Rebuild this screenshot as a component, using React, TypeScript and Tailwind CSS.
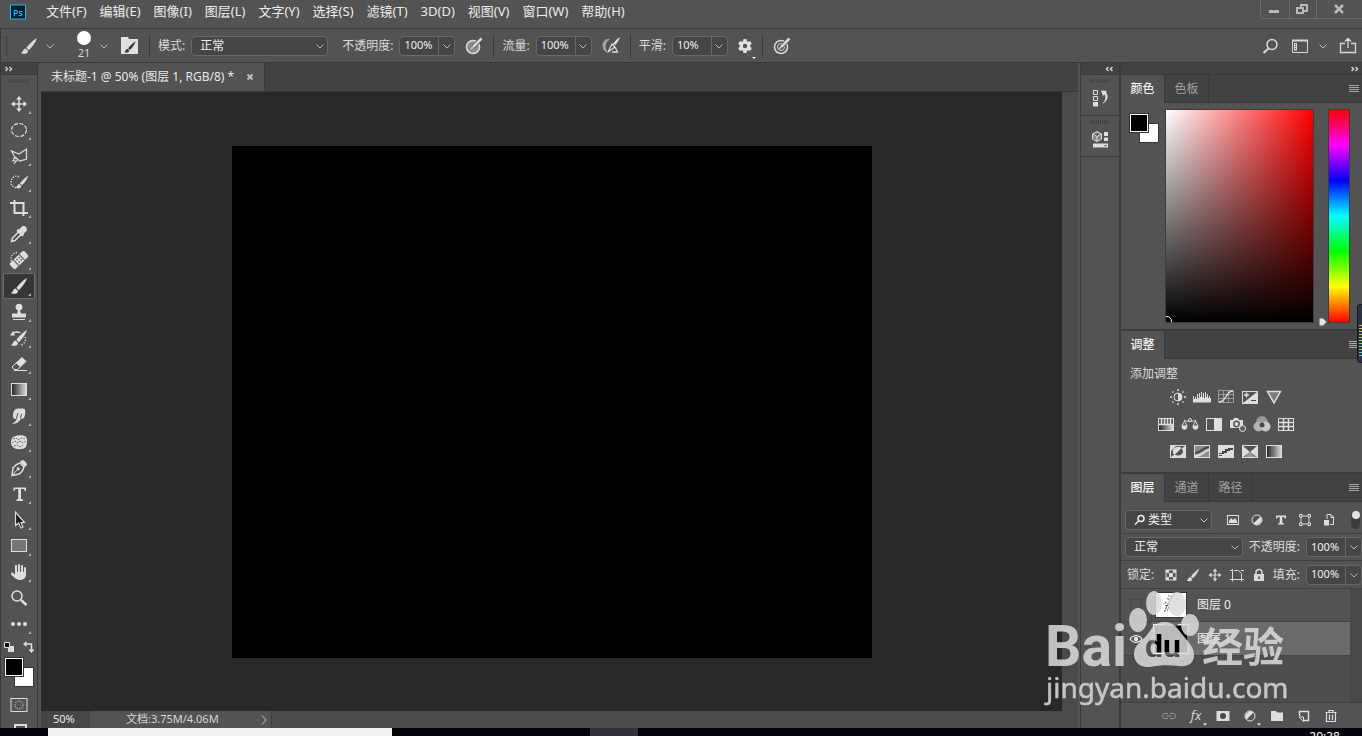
import { useState, type ReactNode } from 'react';
import clsx from 'clsx';
import { FaHand, FaGear } from 'react-icons/fa6';

const MENUS = [
  '文件(F)',
  '编辑(E)',
  '图像(I)',
  '图层(L)',
  '文字(Y)',
  '选择(S)',
  '滤镜(T)',
  '3D(D)',
  '视图(V)',
  '窗口(W)',
  '帮助(H)',
];

/* ---------- Shared pieces ---------- */

type IconProps = { w?: number; h?: number; children: ReactNode };

// Icons are drawn around the centre of their box
function Icon({ w = 18, h = 18, children }: IconProps) {
  return (
    <svg
      width={w}
      height={h}
      viewBox={`${-w / 2} ${-h / 2} ${w} ${h}`}
      fill="none"
      stroke="none"
      aria-hidden="true"
      className="shrink-0"
    >
      {children}
    </svg>
  );
}

function BrushShape() {
  return (
    <g fill="currentColor">
      <path d="M8-8C4.500-6 0-1.800-2.600 1.800L-.2 4.200C3.200 1.200 6.800-4 8-8Z" />
      <path d="M-3.300 2.600C-6 2.800-5.400 5.600-8 7.200C-5.500 8.300-1 8.200-.9 5Z" />
    </g>
  );
}

function MoveShape() {
  return (
    <g>
      <path d="M-6 0H6M0-6V6" stroke="currentColor" strokeWidth="1.500" />
      <path
        d="M0-8L3-4.500H-3ZM0 8L3 4.500H-3ZM-8 0L-4.500-3V3ZM8 0L4.500-3V3Z"
        fill="currentColor"
      />
    </g>
  );
}

function Chevron() {
  return (
    <Icon w={8} h={8}>
      <path d="M-3.500-1.500L0 2L3.500-1.500" stroke="#bdbdbd" />
    </Icon>
  );
}

function Divider() {
  return <span className="h-6 w-px shrink-0 bg-[#3b3b3b]" />;
}

function PercentBox({ label, value }: { label: string; value: string }) {
  return (
    <label className="flex shrink-0 items-center gap-1.5 text-xs">
      {label}
      <span className="flex h-5 w-14 items-center rounded-sm border border-[#686868] bg-[#454545]">
        <input
          defaultValue={value}
          className="w-[38px] min-w-0 bg-transparent pl-1 text-[11px] text-[#f0f0f0] outline-none"
        />
        <span className="flex h-full flex-1 items-center justify-center border-l border-[#686868]">
          <Chevron />
        </span>
      </span>
    </label>
  );
}

function PickBox({
  label,
  value,
  icon,
  className,
}: {
  label: string;
  value: string;
  icon?: ReactNode;
  className: string;
}) {
  return (
    <span
      className={clsx(
        'flex h-5 shrink-0 items-center rounded-sm border border-[#686868] bg-[#454545] pr-[3px] pl-2 text-xs text-[#f0f0f0]',
        className,
      )}
    >
      {icon}
      <select
        aria-label={label}
        className="min-w-0 flex-1 appearance-none bg-transparent outline-none"
      >
        <option>{value}</option>
      </select>
      <Chevron />
    </span>
  );
}

function Grip() {
  return (
    <span className="h-1 w-5 bg-[repeating-linear-gradient(90deg,#404040_0_1px,transparent_1px_2px)]" />
  );
}

function PanelMenu() {
  return (
    <button type="button" aria-label="面板菜单" className="ml-auto pr-[3px]">
      <Icon w={10} h={8}>
        <path d="M-5-3.500H5M-5-1.500H5M-5 .5H5M-5 2.500H5" stroke="#a8a8a8" />
      </Icon>
    </button>
  );
}

function PanelTabs({ tabs }: { tabs: string[] }) {
  const [active, setActive] = useState(tabs[0]);
  return (
    <div className="flex h-7 shrink-0 items-stretch bg-[#424242] text-xs">
      {tabs.map((tab) => (
        <button
          key={tab}
          type="button"
          onClick={() => setActive(tab)}
          className={clsx(
            'w-11 border-r border-[#383838]',
            tab === active
              ? 'bg-[#535353] font-medium text-[#f2f2f2]'
              : 'border-b text-[#a0a0a0]',
          )}
        >
          {tab}
        </button>
      ))}
      <span className="flex flex-1 items-center border-b border-[#383838]">
        <PanelMenu />
      </span>
    </div>
  );
}

/* ---------- Header ---------- */

function MenuBar() {
  return (
    <header className="flex h-[29px] shrink-0 items-center border-b border-[#383838] pl-2.5">
      <svg width="16" height="16" viewBox="0 0 16 16" className="mb-1 mr-5">
        <rect x=".5" y="1" width="15" height="14" fill="#00191f" stroke="#00c8ff" />
        <text
          x="8"
          y="11.500"
          textAnchor="middle"
          fill="#00c8ff"
          className="font-['Open_Sans',sans-serif] text-[9px] font-semibold"
        >
          Ps
        </text>
      </svg>
      <nav className="mb-1 flex gap-[13px] text-[13px] text-[#ececec]">
        {MENUS.map((menu) => (
          <button key={menu} type="button" className="whitespace-nowrap">
            {menu}
          </button>
        ))}
      </nav>
      <div className="ml-auto flex h-[19px] self-start rounded-bl-sm border-b border-l border-[#6b6b6b] text-[#b8b8b8]">
        <button type="button" aria-label="最小化" className="w-7 pl-2">
          <Icon w={12} h={12}>
            <path d="M-6 2.500H4" stroke="currentColor" strokeWidth="3" />
          </Icon>
        </button>
        <button
          type="button"
          aria-label="还原"
          className="w-7 border-x border-[#6b6b6b] pl-1.5"
        >
          <Icon w={12} h={12}>
            <path
              d="M-1-1V-4H5V2H2M-5-1H1V4H-5Z"
              stroke="currentColor"
              strokeWidth="2"
            />
          </Icon>
        </button>
        <button type="button" aria-label="关闭" className="w-[45px] pl-4">
          <Icon w={12} h={12}>
            <path d="M-4-4L4 4M4-4L-4 4" stroke="currentColor" strokeWidth="2.500" />
          </Icon>
        </button>
      </div>
    </header>
  );
}

function PressureIcon({ filled }: { filled?: boolean }) {
  return (
    <Icon>
      <circle
        cx="-1"
        cy="1"
        r="6.500"
        stroke="currentColor"
        strokeWidth="1.500"
        fill={filled ? '#8c8c8c' : 'none'}
      />
      {!filled && <circle cx="-1" cy="1" r="3.500" stroke="currentColor" />}
      <path d="M-1 1L7-7" stroke="#535353" strokeWidth="4" />
      <path d="M-1 1L7.500-7.500" stroke="currentColor" strokeWidth="2.500" />
      <path d="M-3.500 3.500L-2 .5L-.5 2Z" fill="currentColor" />
    </Icon>
  );
}

function OptionsBar() {
  return (
    <div className="flex h-[34px] shrink-0 items-center border-b border-l border-[#383838] pr-[5px] pl-1 text-[#d9d9d9]">
      <span className="h-5 w-[3px] bg-[repeating-linear-gradient(180deg,#404040_0_1px,transparent_1px_2px)]" />
      <button type="button" aria-label="画笔工具" className="ml-3 flex items-center gap-2">
        <Icon>
          <BrushShape />
        </Icon>
        <Chevron />
      </button>
      <span className="ml-2">
        <Divider />
      </span>
      <button
        type="button"
        aria-label="画笔预设"
        className="ml-3 flex items-center gap-1.5 text-[11px]"
      >
        <span className="flex w-5 flex-col items-center">
          <span className="size-3.5 rounded-full bg-white" />
          <span className="leading-4">21</span>
        </span>
        <Chevron />
      </button>
      <button type="button" aria-label="画笔设置" className="mr-2.5 ml-[13px]">
        <Icon>
          <path d="M-9-9H-2L-1-7H8V8H-9Z" fill="#e0e0e0" />
          <g className="text-[#3c3c3c]" transform="translate(0 1) scale(.72)">
            <BrushShape />
          </g>
        </Icon>
      </button>
      <Divider />
      <span className="mr-1.5 ml-2 shrink-0 text-xs">模式:</span>
      <PickBox label="模式" value="正常" className="w-[137px]" />
      <div className="ml-3.5 flex items-center gap-2.5">
        <PercentBox label="不透明度:" value="100%" />
        <button type="button" aria-label="不透明度压力">
          <PressureIcon filled />
        </button>
        <Divider />
      </div>
      <div className="ml-2 flex items-center gap-2.5">
        <PercentBox label="流量:" value="100%" />
        <button type="button" aria-label="喷枪">
          <Icon>
            <path
              d="M-1-7C-5-8-9-4-8.500 0S-6 6 -3 7C-5 4-6 1-5-2S-3-5-1-7Z"
              fill="#a0a0a0"
            />
            <path
              d="M7-7L2-1M-3 6L1-2L4 1L-3 6ZM4 1L6.500 6H1"
              stroke="currentColor"
              strokeWidth="1.300"
            />
            <path d="M8.500-8L3-3L4.500-1.500Z" fill="currentColor" stroke="currentColor" />
          </Icon>
        </button>
        <Divider />
      </div>
      <div className="ml-2 flex items-center gap-2.5">
        <PercentBox label="平滑:" value="10%" />
        <button type="button" aria-label="平滑选项" className="relative">
          <FaGear className="size-3.5 text-[#e0e0e0]" />
          <span className="absolute -right-1 -bottom-1.5 border-x-2 border-t-2 border-x-transparent border-t-white" />
        </button>
        <Divider />
        <button type="button" aria-label="大小压力">
          <PressureIcon />
        </button>
      </div>
      <div className="ml-auto flex items-center gap-3 pl-4">
        <button type="button" aria-label="搜索">
          <Icon>
            <circle cx="2" cy="-1.500" r="5" stroke="currentColor" strokeWidth="1.500" />
            <path d="M-1.500 2.500L-6.500 7" stroke="currentColor" strokeWidth="2" />
          </Icon>
        </button>
        <button type="button" aria-label="工作区" className="flex items-center gap-2.5">
          <Icon>
            <path d="M-7.500-5.500H7.500V6.500H-7.500Z" stroke="currentColor" />
            <path d="M-8-5.500H8" stroke="currentColor" strokeWidth="2" />
            <path d="M-4.500-3V4.500" stroke="currentColor" strokeWidth="3" />
            <path d="M-4.500-2V4" stroke="#535353" strokeDasharray="1 1" />
          </Icon>
          <Chevron />
        </button>
        <button type="button" aria-label="共享">
          <Icon>
            <path
              d="M-3-2.500H-7.500V6.500H7.500V-2.500H3M0 2V-7M-3-4.500L0-7.500L3-4.500"
              stroke="currentColor"
              strokeWidth="1.300"
            />
          </Icon>
        </button>
      </div>
    </div>
  );
}

/* ---------- Tools ---------- */

const line = { stroke: 'currentColor', strokeWidth: 1.5 };

const TOOLS: { name: string; flat?: boolean; icon: ReactNode }[] = [
  { name: '移动工具', icon: <MoveShape /> },
  {
    name: '椭圆选框工具',
    icon: <ellipse rx="7.500" ry="6.500" {...line} strokeWidth="1.200" strokeDasharray="4 1.500" />,
  },
  {
    name: '多边形套索工具',
    icon: (
      <g {...line} strokeWidth="1.200">
        <path d="M-3 3L-7.500-5L0-2L7.500-7V3L1 5L-2 3" />
        <circle cx="-3.500" cy="3.500" r="1.800" />
        <path d="M-5 4.500L-7 5M-3 5L-5 8" />
      </g>
    ),
  },
  {
    name: '快速选择工具',
    icon: (
      <g>
        <path
          d="M0-5.500C-4-7-8-4-8 0S-4 7 0 5"
          {...line}
          strokeDasharray="1.200 1.400"
        />
        <g transform="translate(3 0) scale(.8)">
          <BrushShape />
        </g>
      </g>
    ),
  },
  {
    name: '裁剪工具',
    icon: (
      <path d="M-9-5H4.500V8M-4.500-8V5H9" {...line} strokeWidth="2" />
    ),
  },
  {
    name: '吸管工具',
    icon: (
      <g>
        <path d="M-7.500 7.500L-6.500 4L0-2.500L2.500 0L-4 6.500Z" {...line} />
        <path
          d="M-1.500-4.500L.5-5L3-7.500C6-9 9-6 7.500-3L5-.5L4.500 1.500L3 2.500L-2.500-3Z"
          fill="currentColor"
        />
      </g>
    ),
  },
  {
    name: '污点修复画笔工具',
    icon: (
      <g>
        <path d="M-7.500 1C-9-3-6-7.500-2-7.500" {...line} strokeDasharray="1.200 1.400" />
        <g transform="rotate(-43)">
          <rect x="-10" y="-4" width="20" height="8" rx="2" fill="currentColor" />
          <path d="M-4-4V4M4-4V4" stroke="#535353" />
          <path
            d="M-2-1.500H-.5M1-1.500H2.500M-2 1.500H-.5M1 1.500H2.500"
            stroke="#535353"
            strokeWidth="1.500"
          />
        </g>
      </g>
    ),
  },
  { name: '画笔工具', icon: <BrushShape /> },
  {
    name: '仿制图章工具',
    icon: (
      <path
        d="M-6 8H6V7H-6ZM-7 5.500H7V1.500H2L1-1.500A3.500 3.500 0 1 0-1-1.500L-2 1.500H-7Z"
        fill="currentColor"
      />
    ),
  },
  {
    name: '历史记录画笔工具',
    icon: (
      <g>
        <BrushShape />
        <path d="M-7-4C-4-7 0-6 1-5" {...line} />
        <path d="M-9-2.500L-6-7L-4-2.500Z" fill="currentColor" />
        <path d="M6-1C8 3 4 7 1 7.500" {...line} strokeDasharray="1.200 1.600" />
      </g>
    ),
  },
  {
    name: '橡皮擦工具',
    icon: (
      <g>
        <path d="M-7 3L3-6.500L7-2.500L-1.500 5.500H-5Z" {...line} strokeWidth="1" />
        <path d="M-3-1L3-6.500L7-2.500L1 3Z" fill="currentColor" />
        <path d="M-5 6.500H8" {...line} strokeWidth="1" />
      </g>
    ),
  },
  {
    name: '渐变工具',
    icon: (
      <g>
        <defs>
          <linearGradient id="tool-gradient">
            <stop offset="0" stopColor="#222" />
            <stop offset="1" stopColor="#ddd" />
          </linearGradient>
        </defs>
        <rect
          x="-7.500"
          y="-6.500"
          width="15"
          height="12"
          fill="url(#tool-gradient)"
          stroke="currentColor"
        />
      </g>
    ),
  },
  {
    name: '涂抹工具',
    icon: (
      <g>
        <path
          d="M-6 0C-6-4-5-7-1-7.500H4C7-7 6.500-4 6-1C5.500 2 4 3.500 2 2.500C1 5-2 8-7 8C-3 5.500-2 4-2 2C-3.500 4-6 3-6 0Z"
          fill="currentColor"
        />
        <path d="M-2.500 2L-1-3M1.500 2.500L2.500-2" stroke="#535353" />
      </g>
    ),
  },
  {
    name: '海绵工具',
    icon: (
      <g>
        <path
          d="M-7-4C-5-7 5-8 7-5C9-3 8 2 7 5C4 8-4 8-6 5C-9 3-8-2-7-4Z"
          fill="currentColor"
        />
        <path
          d="M-6-3L-3-4L-1-2L2-4L6-3M-7 1L-4-1L-2 1L2-1L4 1L7-1M-5 4L-2 3L1 5L4 3"
          stroke="#6c6c6c"
          strokeDasharray="2 1"
        />
      </g>
    ),
  },
  {
    name: '钢笔工具',
    icon: (
      <g>
        <path d="M-7 7.500L-6 0C-4-2.500-1-4.500 1-5L5-1C4 2 2 5 0 6Z" {...line} />
        <path d="M-7 7.500L-1.500 1.500" {...line} strokeWidth="1" />
        <circle cx="-.8" cy=".8" r="1.500" fill="currentColor" />
        <path d="M1-6L3-8C5-8 8-5 8-3L6-1Z" fill="currentColor" />
      </g>
    ),
  },
  {
    name: '横排文字工具',
    icon: (
      <path
        d="M-5.500-6.500H7V-3H5.800L5-5H2V5L4 5.500V7H-2.500V5.500L-.8 5V-5H-3.700L-4.500-3H-5.500Z"
        fill="currentColor"
      />
    ),
  },
  {
    name: '路径选择工具',
    icon: (
      <path
        d="M-3.500-8V5.500L-.5 3L2 8L4 7L2 2.500H5.500Z"
        fill="#1c1c1c"
        stroke="currentColor"
        strokeWidth="1.200"
      />
    ),
  },
  {
    name: '矩形工具',
    icon: (
      <rect x="-7.500" y="-6.500" width="15" height="12" fill="#757575" stroke="currentColor" />
    ),
  },
  {
    name: '抓手工具',
    icon: <FaHand x={-8} y={-8} size={16} fill="currentColor" />,
  },
  {
    name: '缩放工具',
    flat: true,
    icon: (
      <g>
        <circle cx="-2" cy="-2" r="5" {...line} />
        <path d="M2 2L7.500 7" {...line} strokeWidth="2.500" />
      </g>
    ),
  },
  {
    name: '编辑工具栏',
    icon: (
      <g fill="currentColor">
        <circle cx="-6" r="2" />
        <circle r="2" />
        <circle cx="6" r="2" />
      </g>
    ),
  },
];

function Toolbar() {
  const [selected, setSelected] = useState('画笔工具');
  return (
    <aside className="flex w-[38px] shrink-0 flex-col items-center overflow-hidden border-x border-[#383838] text-[#dedede]">
      <div className="flex h-3 w-full shrink-0 items-center border-b border-[#383838] bg-[#424242] pl-1">
        <DoubleArrow />
      </div>
      <div className="flex h-4 shrink-0 items-start pt-1">
        <Grip />
      </div>
      {TOOLS.map(({ name, flat, icon }) => (
        <button
          key={name}
          type="button"
          aria-label={name}
          onClick={() => setSelected(name)}
          className={clsx(
            'h-[26px] w-8 shrink-0 rounded-xs border',
            selected === name
              ? 'border-[#6a6a6a] bg-[#363636]'
              : 'border-transparent',
          )}
        >
          <svg viewBox="-15 -12 30 24" className="h-6 w-[30px]" fill="none">
            {icon}
            {!flat && <path d="M12 7V10H9Z" fill="#b0b0b0" />}
          </svg>
        </button>
      ))}
      <div className="flex h-4 shrink-0 items-center gap-2 pt-1">
        <Icon w={12} h={12}>
          <path d="M-1-1H5V5H-1Z" fill="#dedede" />
          <path d="M-4.500-4.500H.5V.5H-4.500Z" fill="#111" stroke="#dedede" />
        </Icon>
        <Icon w={12} h={12}>
          <path d="M-4-3H2.500V3" {...line} />
          <path d="M-6-3L-2.500-6V0ZM2.500 6L-.5 2.500H5.500Z" fill="currentColor" />
        </Icon>
      </div>
      <div className="mt-1 shrink-0">
        <Swatches />
      </div>
      <button type="button" aria-label="快速蒙版" className="mt-[11px] shrink-0">
        <Icon w={18} h={14}>
          <rect x="-8" y="-6.500" width="16" height="13" stroke="currentColor" />
          <circle r="4" stroke="currentColor" strokeDasharray="1.200 1.200" />
        </Icon>
      </button>
      <button type="button" aria-label="屏幕模式" className="mt-2 shrink-0">
        <Icon w={18} h={14}>
          <rect x="-4" y="-2" width="11" height="9" stroke="currentColor" strokeWidth="2" />
        </Icon>
      </button>
    </aside>
  );
}

// Foreground / background colour pair
function Swatches() {
  return (
    <div className="relative size-[30px]">
      <span className="absolute right-0 bottom-0 size-5 border border-[#333] bg-white" />
      <span className="absolute top-0 left-0 size-5 border border-[#333] bg-black outline-1 -outline-offset-2 outline-white" />
    </div>
  );
}

function DoubleArrow({ left }: { left?: boolean }) {
  return (
    <button type="button" aria-label="折叠面板" className={clsx('flex', left && 'rotate-180')}>
      <Icon w={8} h={6}>
        <path d="M-3.500-2L-1.500 0L-3.500 2M.5-2L2.500 0L.5 2" stroke="#d0d0d0" strokeWidth="1.500" />
      </Icon>
    </button>
  );
}

/* ---------- Document ---------- */

function DocumentArea() {
  return (
    <main className="mr-0.5 ml-[3px] flex min-w-0 flex-1 flex-col bg-[#424242]">
      <div className="flex h-[29px] shrink-0 items-stretch border-b border-[#383838]">
        <div className="flex items-center gap-3 border-r border-[#383838] bg-[#535353] px-2.5 text-xs text-[#e8e8e8]">
          <span className="whitespace-nowrap">
            未标题-1 @ 50% (图层 1, RGB/8) *
          </span>
          <button type="button" aria-label="关闭文档">
            <Icon w={8} h={8}>
              <path d="M-2.500-2.500L2.500 2.500M2.500-2.500L-2.500 2.500" stroke="#bdbdbd" strokeWidth="2" />
            </Icon>
          </button>
        </div>
      </div>
      <div className="flex min-h-0 flex-1">
        <div className="flex flex-1 items-center justify-center bg-[#282828]">
          <div className="aspect-5/4 w-[640px] max-w-full bg-black" />
        </div>
        <div className="w-4 bg-[#4a4a4a]" />
      </div>
      <footer className="flex h-[17px] shrink-0 items-stretch bg-[#4a4a4a] text-[11px] text-[#e6e6e6]">
        <span className="flex w-12 items-center bg-[#464646] pl-3">50%</span>
        <button
          type="button"
          className="flex w-[183px] items-center justify-between border-x border-[#404040] bg-[#535353] pr-1 pl-9 whitespace-nowrap text-[#d8d8d8]"
        >
          文档:3.75M/4.06M
          <Icon w={6} h={10}>
            <path d="M-2-4.500L2 0L-2 4.500" stroke="#c8c8c8" />
          </Icon>
        </button>
      </footer>
    </main>
  );
}

/* ---------- Right docks ---------- */

function IconDock() {
  return (
    <aside className="flex w-[41px] shrink-0 flex-col border-r-2 border-l border-[#3b3b3b] text-[#dedede]">
      <div className="flex h-3 items-center justify-end border-b border-[#383838] bg-[#424242] pr-1.5">
        <DoubleArrow left />
      </div>
      <div className="flex h-[41px] flex-col items-center gap-1.5 border-b border-[#383838] pt-1">
        <Grip />
        <button type="button" aria-label="历史记录">
          <Icon>
            <path d="M-6.500-7.500H-2.500V-3.500H-6.500ZM-6.500-1.500H-2.500V2.500H-6.500Z" stroke="currentColor" />
            <path d="M-7 4H-2V8.500H-7Z" fill="currentColor" />
            <path d="M1-7.500L7-7L6-5.500C9-2 8 3 2 6C6 2 6-1 4.500-3.500L3-2Z" fill="currentColor" />
          </Icon>
        </button>
      </div>
      <div className="flex h-[41px] flex-col items-center gap-1.5 border-b border-[#383838] pt-1">
        <Grip />
        <button type="button" aria-label="属性">
          <Icon>
            <path
              d="M-3-7.500L1.500-5V0L-3 2.500L-7.500 0V-5ZM-7-5L-3-2.500L1-5M-3-2.500V2.500"
              fill="#868686"
              stroke="currentColor"
            />
            <path d="M4-7H8V-3H4ZM4-1.500H8V2H4ZM-7 4.500H8V8.500H-7Z" fill="currentColor" />
            <path d="M4 6H7L5.500 7.500Z" fill="#444" />
          </Icon>
        </button>
      </div>
    </aside>
  );
}

function ColorPanel() {
  return (
    <section className="flex h-[256px] shrink-0 flex-col border-b-2 border-[#3b3b3b]">
      <PanelTabs tabs={['颜色', '色板']} />
      <div className="flex items-start pt-1.5 pr-3 pl-2">
        <div className="pt-1">
          <Swatches />
        </div>
        <div className="relative ml-1.5 h-[214px] flex-1 overflow-hidden border border-[#3c3c3c] bg-[linear-gradient(to_top,#000,transparent),linear-gradient(to_right,#fff,#f00)]">
          <span className="absolute -bottom-1 -left-1 size-2.5 rounded-full border border-white" />
        </div>
        <div className="relative ml-3.5 h-[214px] w-[22px] border border-[#3c3c3c] bg-[linear-gradient(to_bottom,#f00,#f0f,#00f,#0ff,#0f0,#ff0,#f00)]">
          <span className="absolute -bottom-1 -left-2.5">
            <Icon w={8} h={8}>
              <path d="M-3.500-3.500H0L3.500 0L0 3.500H-3.500Z" fill="#e6e6e6" />
            </Icon>
          </span>
        </div>
      </div>
    </section>
  );
}

function Frame({ fill = 'none' }: { fill?: string }) {
  return <rect x="-7.500" y="-5.500" width="15" height="12" fill={fill} stroke="currentColor" />;
}

const ADJUSTMENTS: { name: string; icon: ReactNode }[][] = [
  [
    {
      name: '亮度/对比度',
      icon: (
        <g>
          <circle r="4" stroke="currentColor" />
          <path d="M0-4A4 4 0 0 1 0 4Z" fill="currentColor" />
          <path
            d="M0-8V-6M0 6V8M-8 0H-6M6 0H8M-5.500-5.500L-4.500-4.500M5.500 5.500L4.500 4.500M5.500-5.500L4.500-4.500M-5.500 5.500L-4.500 4.500"
            {...line}
          />
        </g>
      ),
    },
    {
      name: '色阶',
      icon: (
        <path
          d="M-9 5.500V-1L-8-1V2H-7V0H-6V2H-5V-3H-4V1H-3V-4H-2V0H-1V-5H0V0H1V-4H2V1H3V-5H4V0H5V-3H6V1H7V-1H8V1H9V5.500Z"
          fill="currentColor"
        />
      ),
    },
    {
      name: '曲线',
      icon: (
        <g>
          <path
            d="M-7.500-6.500H7.500V5.500H-7.500ZM-2.500-6V5M2.500-6V5M-7-2.500H7M-7 1.500H7"
            stroke="#9a9a9a"
          />
          <path d="M-7 5C1 5-1-6 7-6" {...line} />
        </g>
      ),
    },
    {
      name: '曝光度',
      icon: (
        <g>
          <Frame />
          <path d="M7 6V-5L-7 6Z" fill="currentColor" />
          <path d="M-6-2H-1M-3.500-4.500V.5" {...line} />
          <path d="M1 3.500H6" stroke="#444" />
        </g>
      ),
    },
    {
      name: '自然饱和度',
      icon: <path d="M-6.500-5.500H6.500L0 6Z" fill="#7d7d7d" {...line} />,
    },
  ],
  [
    {
      name: '色相/饱和度',
      icon: (
        <g>
          <path d="M-7 1H7V6H-7Z" fill="url(#tool-gradient)" />
          <Frame />
          <path d="M-7 .5H7M-4.500-5V0M-1.500-5V0M1.500-5V0M4.500-5V0" {...line} />
        </g>
      ),
    },
    {
      name: '色彩平衡',
      icon: (
        <g>
          <path d="M-6-4C-3-2 3-2 6-4M-5.500-3L-8 2H-3ZM5.500-3L8 2H3Z" stroke="currentColor" />
          <circle cy="-4" r="1.500" stroke="currentColor" />
          <path d="M-8.500 2H-2.500C-2.500 7-8.500 7-8.500 2ZM2.500 2H8.500C8.500 7 2.500 7 2.500 2Z" fill="currentColor" />
        </g>
      ),
    },
    {
      name: '黑白',
      icon: (
        <g>
          <Frame />
          <path d="M0-5H7V6H0Z" fill="currentColor" />
        </g>
      ),
    },
    {
      name: '照片滤镜',
      icon: (
        <g>
          <path d="M-8-4H-5L-4-6H0L1-4H5V4H-8Z" fill="currentColor" />
          <circle cx="-1.500" cy="0" r="2.700" stroke="#535353" strokeWidth="1.500" />
          <circle cx="4.500" cy="4.500" r="3" fill="#626262" stroke="currentColor" />
        </g>
      ),
    },
    {
      name: '通道混合器',
      icon: (
        <g>
          <circle cy="-2.500" r="5.500" fill="#999" />
          <circle cx="-3.500" cy="2.500" r="5" fill="#b4b4b4" />
          <circle cx="3.500" cy="2.500" r="5" fill="#c9c9c9" />
          <circle cy="1" r="2.500" fill="#484848" />
        </g>
      ),
    },
    {
      name: '颜色查找',
      icon: (
        <g>
          <Frame />
          <path d="M-2.500-5V6M2.500-5V6M-7-1.500H7M-7 2.500H7" {...line} />
        </g>
      ),
    },
  ],
  [
    {
      name: '反相',
      icon: (
        <g>
          <Frame />
          <path d="M-7-5H-2L-7 0ZM7 6H2L7 1ZM7-5V6H-7Z" fill="currentColor" />
          <ellipse cy=".5" rx="5" ry="4" fill="#535353" />
          <path d="M-3.500 4A4.500 4 0 0 1 3.500-3Z" fill="currentColor" />
        </g>
      ),
    },
    {
      name: '色调分离',
      icon: (
        <g>
          <Frame fill="#8c8c8c" />
          <path d="M-7 2C-1 2 1-4 7-4" stroke="#444" strokeWidth="2" />
          <path d="M-7 5C1 5 3-1 7-1" {...line} strokeWidth="2" />
        </g>
      ),
    },
    {
      name: '阈值',
      icon: (
        <g>
          <Frame fill="currentColor" />
          <path d="M-7 2H-4V0H-1V-2H2V-3H7V-1H4V0H1V2H-2V3H-7ZM-7 4H-4V5H-7Z" fill="#444" />
        </g>
      ),
    },
    {
      name: '可选颜色',
      icon: (
        <g>
          <Frame fill="#535353" />
          <path d="M-7-5L0 1L-7 6ZM7-5L0 1L7 6Z" fill="currentColor" />
          <path d="M-6 6L0 1L6 6Z" fill="#999" />
        </g>
      ),
    },
    { name: '渐变映射', icon: <Frame fill="url(#tool-gradient)" /> },
  ],
];

function AdjustmentsPanel() {
  return (
    <section className="flex h-[143px] shrink-0 flex-col border-b-2 border-[#3b3b3b]">
      <PanelTabs tabs={['调整']} />
      <p className="px-[9px] pt-1.5 text-xs leading-[18px] text-[#d9d9d9]">添加调整</p>
      <div className="ml-[33px] flex w-36 flex-col text-[#dedede]">
        {ADJUSTMENTS.map((row) => (
          <div key={row[0].name} className="flex h-[27px] items-center justify-center">
            {row.map(({ name, icon }) => (
              <button
                key={name}
                type="button"
                aria-label={name}
                className="flex w-6 justify-center"
              >
                <Icon>{icon}</Icon>
              </button>
            ))}
          </div>
        ))}
      </div>
    </section>
  );
}

const FILTERS: { name: string; icon: ReactNode }[] = [
  {
    name: '像素图层',
    icon: (
      <g>
        <rect x="-5.500" y="-4.500" width="11" height="9" stroke="currentColor" />
        <path d="M-4 3V1L-2-2L0 0L2-2L4 1V3Z" fill="currentColor" />
      </g>
    ),
  },
  {
    name: '调整图层',
    icon: (
      <g>
        <circle r="5" stroke="currentColor" />
        <path d="M3.500-3.500A5 5 0 0 1-3.500 3.500Z" fill="currentColor" />
      </g>
    ),
  },
  {
    name: '文字图层',
    icon: (
      <path
        d="M-5-4.500H5V-1.500H4L3-3H1.300V3L3 3.500V4.500H-3V3.500L-1.300 3V-3H-3L-4-1.500H-5Z"
        fill="currentColor"
      />
    ),
  },
  {
    name: '形状图层',
    icon: (
      <g stroke="currentColor">
        <path d="M-4-4H4V4H-4Z" />
        <path d="M-5.500-5.500H-3V-3H-5.500ZM3-5.500H5.500V-3H3ZM-5.500 3H-3V5.500H-5.500ZM3 3H5.500V5.500H3Z" fill="#535353" />
      </g>
    ),
  },
  {
    name: '智能对象',
    icon: (
      <g>
        <path d="M-2-1V-5.500H2L4.500-3V4.500H1M2-5V-2.500H4.500" stroke="currentColor" />
        <path d="M-5 0H0V5.500H-5Z" fill="currentColor" />
      </g>
    ),
  },
];

const LOCKS: { name: string; icon: ReactNode }[] = [
  {
    name: '锁定透明像素',
    icon: (
      <g>
        <rect x="-5" y="-5" width="10" height="10" stroke="currentColor" />
        <path
          d="M-5-5H-2V-2H-5ZM2-5H5V-2H2ZM-2-2H2V2H-2ZM-5 2H-2V5H-5ZM2 2H5V5H2Z"
          fill="currentColor"
        />
      </g>
    ),
  },
  {
    name: '锁定图像像素',
    icon: (
      <g transform="scale(.8)">
        <BrushShape />
      </g>
    ),
  },
  {
    name: '锁定位置',
    icon: (
      <g transform="scale(.8)">
        <MoveShape />
      </g>
    ),
  },
  {
    name: '锁定嵌套',
    icon: (
      <path
        d="M-7-4.500H-4.500V-6M-4.500-4.500V4.500H4.500V-1.500L1.500-4.500H-3M-7 4.500H-4.500V6.500M4.500 4.500H7M4.500 4.500V6.500M4-4.500H7"
        stroke="currentColor"
      />
    ),
  },
  {
    name: '锁定全部',
    icon: (
      <g>
        <path d="M-3 0V-2.500A3 3 0 0 1 3-2.500V0" {...line} />
        <path d="M-5-1H5V6H-5Z" fill="currentColor" />
        <path d="M0 1.500V4" stroke="#444" strokeWidth="1.500" />
      </g>
    ),
  },
];

const LAYER_ACTIONS: { name: string; icon: ReactNode }[] = [
  {
    name: '链接图层',
    icon: (
      <path
        d="M-1-2.500H-4A2.500 2.500 0 0 0-4 2.500H-1M1-2.500H4A2.500 2.500 0 0 1 4 2.500H1M-3 0H3"
        stroke="#949494"
      />
    ),
  },
  {
    name: '图层样式',
    icon: (
      <g>
        <text
          x="0"
          y="4"
          textAnchor="middle"
          fill="currentColor"
          className="font-['Open_Sans',sans-serif] text-[13px] italic"
        >
          fx
        </text>
        <path d="M7 7.500H11L9 9.500Z" fill="#fff" />
      </g>
    ),
  },
  {
    name: '添加蒙版',
    icon: (
      <g>
        <path d="M-6.500-5H6.500V5H-6.500Z" fill="currentColor" />
        <circle r="3" fill="#484848" />
      </g>
    ),
  },
  {
    name: '新建调整图层',
    icon: (
      <g>
        <circle r="5" stroke="currentColor" />
        <path d="M3.500-3.500A5 5 0 0 0-3.500 3.500Z" fill="currentColor" />
        <path d="M7 7.500H11L9 9.500Z" fill="#fff" />
      </g>
    ),
  },
  {
    name: '新建组',
    icon: <path d="M-6-5H-1L0-3.500H6V5H-6Z" fill="currentColor" />,
  },
  {
    name: '新建图层',
    icon: (
      <g>
        <path d="M-4.500 0V-4.500H4.500V4.500H0" {...line} />
        <path d="M-5 1H-.5V5.500Z" stroke="currentColor" />
      </g>
    ),
  },
  {
    name: '删除图层',
    icon: (
      <path
        d="M-5.500-3.500H5.500M-2-4V-5.500H2V-4M-4.500-3V5.500H4.500V-3M-1.500-1.500V4M1.500-1.500V4"
        stroke="currentColor"
        strokeWidth="1.200"
      />
    ),
  },
];

function LayersPanel() {
  return (
    <section className="flex min-h-0 flex-1 flex-col text-[#d9d9d9]">
      <PanelTabs tabs={['图层', '通道', '路径']} />
      <div className="flex h-8 shrink-0 items-center overflow-hidden border-b border-[#404040] pt-1 pl-1">
        <PickBox
          label="筛选类型"
          value="类型"
          className="w-[87px]"
          icon={
            <Icon w={14} h={12}>
              <circle cx="0" cy="-1.500" r="3" {...line} />
              <path d="M-2 .5L-6 4.500" {...line} />
            </Icon>
          }
        />
        <div className="ml-[9px] flex text-[#dedede]">
          {FILTERS.map(({ name, icon }) => (
            <button key={name} type="button" aria-label={name} className="flex w-6 justify-center">
              <Icon w={16} h={16}>
                {icon}
              </Icon>
            </button>
          ))}
        </div>
        <button
          type="button"
          aria-label="打开筛选"
          className="ml-2.5 flex h-[18px] w-[9px] shrink-0 items-start justify-center rounded-full bg-[#3c3c3c]"
        >
          <span className="block size-2 rounded-full bg-[#e0e0e0]" />
        </button>
      </div>
      <div className="flex h-[27px] shrink-0 items-center justify-between overflow-hidden border-b border-[#404040] pl-1">
        <PickBox label="混合模式" value="正常" className="w-[118px]" />
        <PercentBox label="不透明度:" value="100%" />
      </div>
      <div className="flex h-7 shrink-0 items-center justify-between overflow-hidden border-b border-[#404040] pl-1.5">
        <div className="flex items-center">
          <span className="mr-1.5 text-xs">锁定:</span>
          {LOCKS.map(({ name, icon }) => (
            <button key={name} type="button" aria-label={name} className="flex w-[22px] justify-center">
              <Icon w={16} h={16}>
                {icon}
              </Icon>
            </button>
          ))}
        </div>
        <PercentBox label="填充:" value="100%" />
      </div>
      <div className="flex min-h-0 flex-1 bg-[#4d4d4d]">
        <ul className="flex-1 text-xs text-[#f0f0f0]">
          <li className="flex h-[33px] items-center border-b border-[#444] bg-[#535353]">
            <span className="flex h-full w-[31px] items-center justify-center border-r border-[#474747]">
              <span className="size-3 border border-[#474747]" />
            </span>
            <svg viewBox="0 0 32 26" className="ml-[3px] h-[26px] w-8 border border-[#333] bg-white">
              <path
                d="M9 20L14 9L20 1M10 14L15 12M12 6L16 8M11 10L8 12M14 15L12 19M17 4L13 3"
                stroke="#111"
                strokeDasharray="2 1"
                fill="none"
              />
              <path
                d="M17 8L22 10M19 13L24 14M16 17L21 19M21 6L25 8M24 17V20"
                stroke="#888"
                strokeDasharray="1 1"
                fill="none"
              />
            </svg>
            <span className="ml-2.5">图层 0</span>
          </li>
          <li className="flex h-[34px] items-center border-b border-[#444] bg-[#6b6b6b]">
            <button
              type="button"
              aria-label="图层可见性"
              className="flex h-full w-[31px] items-center justify-center border-r border-[#5d5d5d] bg-[#535353]"
            >
              <Icon w={14} h={10}>
                <path d="M-6 0C-3-4.500 3-4.500 6 0C3 4.500-3 4.500-6 0Z" stroke="#e6e6e6" strokeWidth="1.300" />
                <circle r="2.200" fill="#e6e6e6" />
              </Icon>
            </button>
            <svg viewBox="0 0 36 30" className="ml-px h-[30px] w-9" fill="none">
              <rect x="2" y="2" width="32" height="26" fill="#000" />
              <path d="M.5 8V.5H11M25 .5H35.500V8M35.500 22V29.500H25M11 29.500H.5V22" stroke="#fff" />
            </svg>
            <span className="ml-2">图层 1</span>
          </li>
        </ul>
        <div className="w-3 bg-[#484848]" />
      </div>
      <footer className="flex h-[26px] shrink-0 items-center justify-end border-t border-[#404040] pr-[18px] text-[#dedede]">
        {LAYER_ACTIONS.map(({ name, icon }) => (
          <button key={name} type="button" aria-label={name} className="flex w-[27px] justify-center">
            <Icon w={24} h={20}>
              {icon}
            </Icon>
          </button>
        ))}
      </footer>
    </section>
  );
}

function RightPanels() {
  return (
    <aside className="flex w-[241px] shrink-0 flex-col">
      <div className="flex h-3 shrink-0 items-center justify-end border-b border-[#383838] bg-[#424242] pr-[3px]">
        <DoubleArrow />
      </div>
      <ColorPanel />
      <AdjustmentsPanel />
      <LayersPanel />
    </aside>
  );
}

/* ---------- Overlays ---------- */

function Watermark() {
  return (
    <svg
      width="250"
      height="120"
      viewBox="1042 588 250 120"
      className="pointer-events-none absolute right-[70px] bottom-7 text-[#dcdcdc] opacity-85"
      fill="currentColor"
      role="img"
      aria-label="Baidu 经验"
    >
      <defs>
        <mask id="paw-mask">
          <path
            d="M1163 622C1172 621 1177 627 1181 633C1187 641 1194 646 1194 655C1194 664 1187 667 1179 666C1169 665 1160 665 1150 667C1140 668 1134 662 1134 654C1134 645 1142 641 1147 635C1152 628 1155 623 1163 622Z"
            fill="#fff"
          />
          <text
            x="1163"
            y="657"
            textAnchor="middle"
            fill="#000"
            className="font-['Roboto',sans-serif] text-[32px] font-bold"
          >
            du
          </text>
        </mask>
      </defs>
      <text x="1045" y="666" className="font-['Roboto',sans-serif] text-[57px] font-bold">
        Bai
      </text>
      <ellipse cx="1154" cy="603" rx="8" ry="12" />
      <ellipse cx="1177" cy="604" rx="9" ry="12" />
      <ellipse cx="1138" cy="620" rx="9" ry="12" />
      <ellipse cx="1190" cy="625" rx="9" ry="11" />
      <rect x="1130" y="618" width="68" height="52" mask="url(#paw-mask)" />
      <text x="1202" y="662" className="font-['Noto_Sans_CJK_SC',sans-serif] text-[41px] font-bold">
        经验
      </text>
      <text
        x="1046"
        y="698"
        stroke="currentColor"
        strokeWidth=".5"
        className="font-['Noto_Sans',sans-serif] text-[28px]"
      >
        jingyan.baidu.com
      </text>
    </svg>
  );
}

function Taskbar() {
  return (
    <div className="flex h-2 shrink-0 items-start overflow-hidden bg-[#02040a] pl-12 text-xs text-white">
      <span className="h-full w-[344px] bg-[#f2f2f2]" />
      <span className="ml-[198px] h-full w-12 bg-[#2f3238]" />
      <time className="mt-px mr-[22px] ml-auto">20:38</time>
    </div>
  );
}

export default function App() {
  return (
    <div className="relative flex h-dvh flex-col overflow-hidden bg-[#535353] font-['Noto_Sans','Noto_Sans_CJK_SC',sans-serif] select-none">
      <MenuBar />
      <OptionsBar />
      <div className="flex min-h-0 flex-1">
        <Toolbar />
        <DocumentArea />
        <IconDock />
        <RightPanels />
      </div>
      <Taskbar />
      <Watermark />
      {/* Floating edge widget */}
      <div className="absolute top-[304px] right-0 h-[59px] w-[5px] rounded-l-sm border border-r-0 border-[#151823] bg-[#2d3242] pt-5 pl-px">
        <div className="h-8 bg-[repeating-linear-gradient(180deg,transparent_0_1px,#2d3242_1px_3px),linear-gradient(180deg,#e6b94a,#8fce6a,#4fd0d0)]" />
      </div>
    </div>
  );
}
